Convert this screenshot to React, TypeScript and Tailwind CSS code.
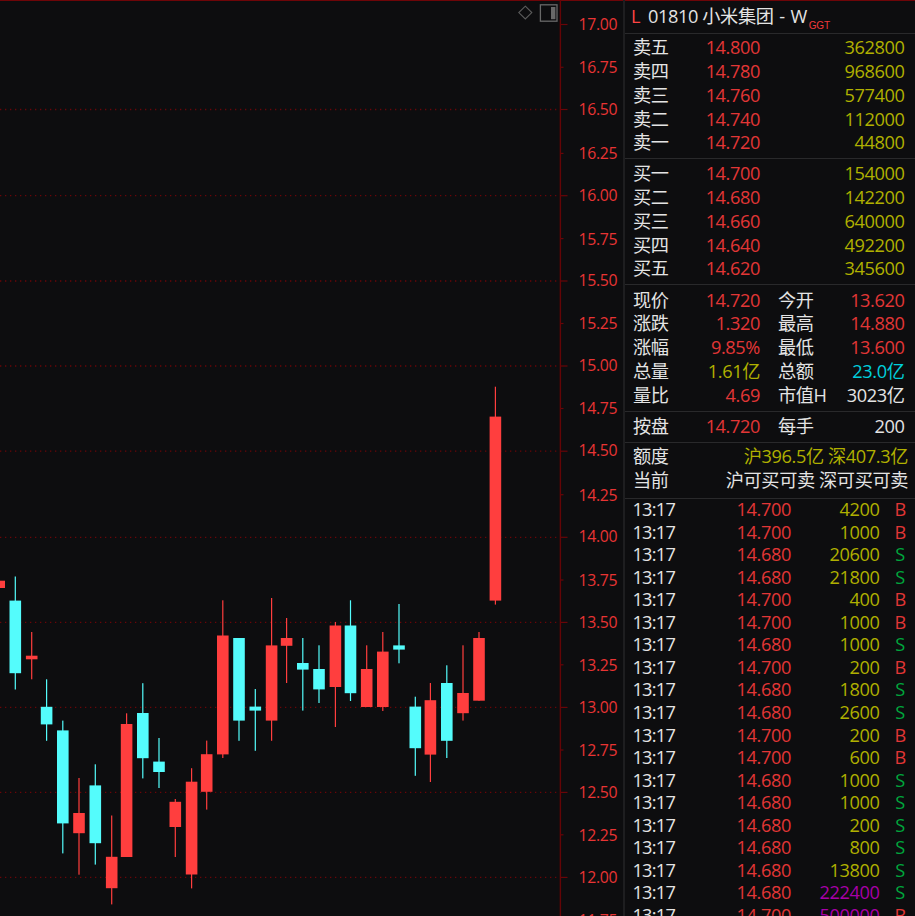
import React from 'react';

const RED = '#ff3e3e';
const CYAN = '#54fcfc';

// x, high, body top, body bottom, low, colour
type Candle = [number, number, number, number, number, string];

const candles: Candle[] = [
  [-0.8, 580.7, 580.7, 588, 588, RED],
  [15.3, 576.5, 600.6, 673.2, 689.5, CYAN],
  [31.7, 632, 655.7, 659.3, 679.3, RED],
  [46.6, 679.3, 706.8, 724.4, 740.8, CYAN],
  [62.8, 720.6, 730.4, 823.4, 853.4, CYAN],
  [79, 778, 813, 833.2, 874.7, RED],
  [95.3, 764.3, 785.4, 843.2, 864.6, CYAN],
  [111.7, 815.5, 856.8, 888.2, 904.4, RED],
  [126.6, 713.3, 724, 857, 857, RED],
  [142.8, 683.2, 713, 758.2, 778.4, CYAN],
  [159, 738, 761.6, 772, 788, CYAN],
  [175.3, 799, 801.8, 827, 857, RED],
  [191.6, 768.2, 781.7, 874.5, 888.4, RED],
  [206.7, 740.6, 754.2, 791.8, 809.6, RED],
  [222.8, 600.3, 635.5, 754.4, 758, RED],
  [239, 638, 638, 720.6, 740.8, CYAN],
  [255.3, 689, 706.6, 710.6, 750.8, CYAN],
  [271.6, 598, 645.4, 720.6, 740.8, RED],
  [286.6, 618, 638, 645.8, 683, RED],
  [302.8, 638, 663, 669.6, 710.6, CYAN],
  [319, 645.3, 669, 689.4, 703, CYAN],
  [335.4, 622, 625.5, 687, 727, RED],
  [350.5, 600.3, 625.5, 693.2, 701, CYAN],
  [366.7, 645.3, 669, 707, 707, RED],
  [382.8, 632, 651.6, 707, 711, RED],
  [399, 604, 645.4, 649.6, 663.3, CYAN],
  [415.3, 696.7, 706.6, 748.2, 775.8, CYAN],
  [430.4, 683, 700.2, 754.6, 782, RED],
  [446.8, 665.3, 683, 740.8, 758, CYAN],
  [463, 645.3, 693, 713.2, 720.6, RED],
  [479, 632, 638, 700.7, 700.7, RED],
  [495.4, 386.7, 416.6, 600.6, 604.6, RED],
];

// label, tick y
const ticks: [string, number][] = [
  ['17.00', 24.5],
  ['16.75', 67.3],
  ['16.50', 109.5],
  ['16.25', 153.4],
  ['16.00', 195.7],
  ['15.75', 238.6],
  ['15.50', 281],
  ['15.25', 323.5],
  ['15.00', 366],
  ['14.75', 408.5],
  ['14.50', 451.2],
  ['14.25', 494.7],
  ['14.00', 537.3],
  ['13.75', 580],
  ['13.50', 622.4],
  ['13.25', 664.8],
  ['13.00', 707.4],
  ['12.75', 750],
  ['12.50', 792.4],
  ['12.25', 834.8],
  ['12.00', 877.4],
  ['11.75', 920.5],
];

const asks = [
  ['卖五', '14.800', '362800'],
  ['卖四', '14.780', '968600'],
  ['卖三', '14.760', '577400'],
  ['卖二', '14.740', '112000'],
  ['卖一', '14.720', '44800'],
];

const bids = [
  ['买一', '14.700', '154000'],
  ['买二', '14.680', '142200'],
  ['买三', '14.660', '640000'],
  ['买四', '14.640', '492200'],
  ['买五', '14.620', '345600'],
];

const red = 'text-[#e23636]';
const yellow = 'text-[#b0b000]';
const white = 'text-[#e4e4e4]';

const quotes = [
  ['现价', '14.720', red, '今开', '13.620', red],
  ['涨跌', '1.320', red, '最高', '14.880', red],
  ['涨幅', '9.85%', red, '最低', '13.600', red],
  ['总量', '1.61亿', yellow, '总额', '23.0亿', 'text-[#00cfdc]'],
  ['量比', '4.69', red, '市值H', '3023亿', white],
];

const trades = [
  ['14.700', '4200', 'B'],
  ['14.700', '1000', 'B'],
  ['14.680', '20600', 'S'],
  ['14.680', '21800', 'S'],
  ['14.700', '400', 'B'],
  ['14.700', '1000', 'B'],
  ['14.680', '1000', 'S'],
  ['14.700', '200', 'B'],
  ['14.680', '1800', 'S'],
  ['14.680', '2600', 'S'],
  ['14.700', '200', 'B'],
  ['14.700', '600', 'B'],
  ['14.680', '1000', 'S'],
  ['14.680', '1000', 'S'],
  ['14.680', '200', 'S'],
  ['14.680', '800', 'S'],
  ['14.680', '13800', 'S'],
  ['14.680', '222400', 'S'],
  ['14.700', '500000', 'B'],
];

const Chart = () => (
  <svg width="623" height="916" viewBox="0 0 623 916" className="block shrink-0 tracking-[-0.3px]">
    {ticks.map(([label, y], i) => (
      <g key={label}>
        {i % 2 === 0 && i > 0 && (
          <line x1="0" x2="559" y1={y} y2={y} stroke="#6a0508" strokeWidth="1.3" strokeDasharray="1.3 3.7" />
        )}
        <line x1="560" x2={i % 2 ? 563.5 : 567.5} y1={y} y2={y} stroke="#6a0508" strokeWidth="1.2" />
        <text x="617.3" y={i % 2 ? y + 5.9 : y + 5.1} textAnchor="end" fontSize="15.8" fill="#e83434">
          {label}
        </text>
      </g>
    ))}
    <line x1="560.4" x2="560.4" y1="0" y2="916" stroke="#640406" strokeWidth="1.4" />

    {candles.map(([x, high, top, bottom, low, color]) => (
      <g key={x} fill={color}>
        <rect x={x - 0.6} y={high} width="1.2" height={low - high} />
        <rect x={x - 5.8} y={top} width="11.6" height={bottom - top} />
      </g>
    ))}

    <path d="M525.3 6.2 L531.8 12.6 L525.3 19 L518.8 12.6 Z" fill="none" stroke="#5c5c5c" strokeWidth="1.1" />
    <rect x="540.4" y="4.8" width="16.6" height="16.4" fill="none" stroke="#686868" strokeWidth="1.3" />
    <rect x="551" y="7" width="4.4" height="12.2" fill="#686868" />
  </svg>
);

const Depth = ({ rows }: { rows: string[][] }) => (
  <>
    {rows.map(([name, price, volume]) => (
      <div key={name} className="flex h-[23.8px] items-center pl-[8px] pr-[10.5px]">
        <span className={`w-[60px] ${white}`}>{name}</span>
        <span className={`w-[67px] text-right ${red}`}>{price}</span>
        <span className={`flex-1 text-right ${yellow}`}>{volume}</span>
      </div>
    ))}
  </>
);

const Quote = ({ row }: { row: string[] }) => (
  <div className="flex h-[23.8px] items-center pl-[8px] pr-[10.5px]">
    <span className={`w-[60px] ${white}`}>{row[0]}</span>
    <span className={`w-[67px] text-right ${row[2]}`}>{row[1]}</span>
    <span className={`w-[68px] pl-[18px] ${white}`}>{row[3]}</span>
    <span className={`flex-1 text-right ${row[5]}`}>{row[4]}</span>
  </div>
);

const App = () => {
  return (
    <div className="flex h-[916px] w-[915px] flex-col overflow-hidden bg-[#0d0d0f] font-['Open_Sans','Noto_Sans_CJK_SC',sans-serif] text-[18.2px] leading-none tracking-[-0.4px] whitespace-nowrap">
      <div className="-mb-px h-px shrink-0 bg-[#6e0508]"></div>
      <div className="flex min-h-0 flex-1">
        <Chart />
        <div className="flex min-w-0 flex-1 flex-col border-l-2 border-[#1e1e20]">
          <div className="flex h-[34px] shrink-0 items-center border-b border-[#29292b] pl-[6px]">
            <span className="w-[17px] text-[#ff4444]">L</span>
            <span className={white}>
              01810 小米集团<span className="px-[1.4px]"> - </span>W
            </span>
            <span className="pt-[18px] pl-[2px] font-['Liberation_Sans',sans-serif] text-[10px] tracking-[-0.2px] text-[#f03a3a]">
              GGT
            </span>
          </div>
          <div className="h-[125px] shrink-0 border-b border-[#29292b] pt-[1.5px]">
            <Depth rows={asks} />
          </div>
          <div className="h-[126px] shrink-0 border-b border-[#29292b] pt-[2.5px]">
            <Depth rows={bids} />
          </div>
          <div className="h-[127px] shrink-0 border-b border-[#29292b] pt-[2.9px]">
            {quotes.map((row) => (
              <Quote key={row[0]} row={row} />
            ))}
          </div>
          <div className="h-[31px] shrink-0 border-b border-[#29292b] pt-[2px]">
            <Quote row={['按盘', '14.720', red, '每手', '200', white]} />
          </div>
          <div className="h-[56px] shrink-0 border-b border-[#29292b] pt-[1.4px]">
            <div className="flex h-[23.8px] items-center justify-between pl-[8px] pr-[7px]">
              <span className={white}>额度</span>
              <span className={yellow}>沪396.5亿 深407.3亿</span>
            </div>
            <div className="flex h-[23.8px] items-center justify-between pl-[8px] pr-[7px]">
              <span className={white}>当前</span>
              <span className={white}>沪可买可卖 深可买可卖</span>
            </div>
          </div>
          {/* the last trade runs off the bottom edge */}
          <div className="-mt-[0.8px] min-h-0 flex-1 overflow-hidden">
            {trades.map(([price, volume, side], i) => (
              <div key={i} className="flex h-[22.53px] items-center pl-[7.4px] *:shrink-0">
                <span className={`w-[60px] tracking-[-0.7px] ${white}`}>13:17</span>
                <span className={`w-[98.6px] text-right ${red}`}>{price}</span>
                <span className={`w-[88.6px] text-right ${volume.length > 5 ? 'text-[#a800a8]' : yellow}`}>
                  {volume}
                </span>
                <span className={`w-[41px] text-center ${side === 'B' ? red : 'text-[#00a63c]'}`}>{side}</span>
              </div>
            ))}
          </div>
        </div>
      </div>
    </div>
  );
};

export default App;
